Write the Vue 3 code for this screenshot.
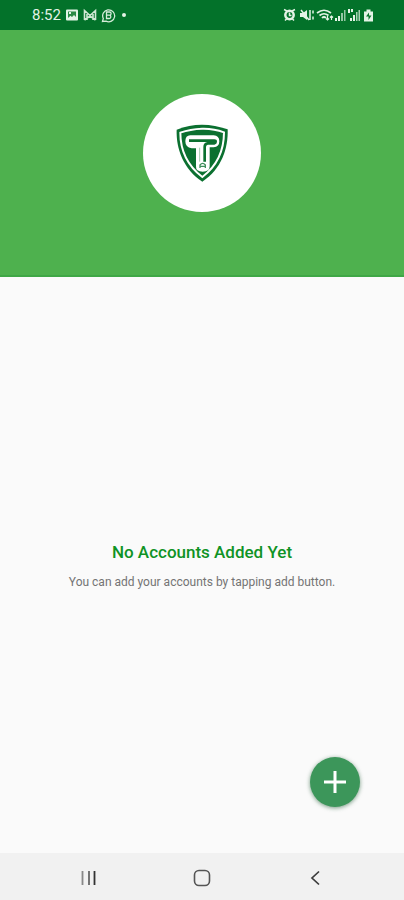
<script setup>
const time = '8:52'
</script>

<template>
  <div class="screen">
    <div class="status">
      <div class="status-group">
        <span class="time">{{ time }}</span>
        <svg width="14" height="14" viewBox="0 0 14 14" aria-hidden="true">
          <rect x="1" y="1.500" width="12" height="11" rx="1" fill="#e4f3e6" />
          <path d="M3 3.500h8v5.500l-2-2-2 2-1.500-1.200L3 10z" fill="#2b8a45" />
          <path d="M4 4h2v2H4z" fill="#e4f3e6" />
        </svg>
        <svg width="14" height="14" viewBox="0 0 14 14" aria-hidden="true">
          <path d="M1.500 12V2.500L7 7.500l5.500-5V12M4 12V6M10 12V6M1.500 12L7 8l5.500 4" fill="none" stroke="#cfe8d3" stroke-width="1.600" />
        </svg>
        <svg width="15" height="15" viewBox="0 0 15 15" aria-hidden="true">
          <path d="M1.500 13.500l.8-3A6 6 0 1 1 5 13.200z" fill="none" stroke="#d5ecd9" stroke-width="1.300" />
          <path d="M5.500 4h2.800a1.600 1.600 0 0 1 .4 3.200A1.700 1.700 0 0 1 8.300 10.500H5.500zM6 7.200h2.500" fill="none" stroke="#d5ecd9" stroke-width="1.300" />
        </svg>
        <span class="dot"></span>
      </div>
      <svg class="indicators" width="94" height="16" viewBox="0 0 94 16" aria-hidden="true">
        <g fill="none" stroke="#e4f3e6" stroke-width="1.500">
          <circle cx="7.500" cy="8" r="4.200" stroke-width="2.500" />
          <path d="M2 2.500l3 1.500M13 2.500l-3 1.500M3 13.500l2-2M12 13.500l-2-2M7.500 5.500v3h2" />
          <path d="M19 3l8 10M28 3v10M31 3.500v3M31 9.500v3" />
          <path d="M35 6q7-5.500 14 0M37.500 8.500q4.500-3.500 9 0M40 11q2-2 4 0" stroke-width="1.700" />
          <path d="M45.500 9v4M44 11.500l1.500 1.500 1.500-1.500M49.500 13V9M48 10.500L49.500 9l1.500 1.500" stroke-width="1.200" />
        </g>
        <g fill="#e4f3e6">
          <path d="M18 6h3l4-3v10l-4-3h-3z" />
          <path d="M53 11h2v3h-2zM56 9h2v5h-2z" />
          <path d="M59 6h2v8h-2zM62 3h1.500v11H62z" opacity=".65" />
          <path d="M66 2h2v4h-2zM69 2h2v3h-2zM68 11h2v3h-2zM71 8h2v6h-2z" />
          <path d="M74 5h1.500v9H74zM76.500 3H78v11h-1.500z" opacity=".75" />
          <path d="M82 4.500h2.500V2.500h4v2H91v10h-9z" />
        </g>
        <path d="M87 5.500l-3 4h2.500V13l3-4.500H87z" fill="#0a742c" />
      </svg>
    </div>

    <header class="hero">
      <div class="badge">
        <svg width="54" height="60" viewBox="0 0 162 180" role="img" aria-label="Shield logo">
          <path d="M5 20Q42 5 81 5T158 19C160 75 140 138 82 176C25 138 3 78 5 20Z" fill="#0b7030" />
          <path d="M16 29Q46 18 81 17T147 28C147 76 131 125 82 162C34 125 16 76 16 29Z" fill="none" stroke="#fff" stroke-width="6" />
          <path d="M46 37H116Q133 38 133 55T116 73H104V130Q104 146 83 146T63 130V76H50Q31 73 31 55T46 37Z" fill="#fff" />
          <path d="M42 53H118Q122 53 122 56T118 61H98Q89 62 89 72V116" fill="none" stroke="#0b7030" stroke-width="8" stroke-linejoin="round" />
          <path d="M74 74V116" fill="none" stroke="#a5cbb0" stroke-width="3" />
          <path d="M75 135V126Q83 116 91 126V135M75 130H91" fill="none" stroke="#3f8f5c" stroke-width="4" />
        </svg>
      </div>
    </header>

    <main class="content">
      <h1>No Accounts Added Yet</h1>
      <p>You can add your accounts by tapping add button.</p>
      <button class="add" type="button" aria-label="Add account">
        <svg width="26" height="26" viewBox="0 0 26 26" aria-hidden="true">
          <path d="M13 2V24M2 13H24" fill="none" stroke="#fff" stroke-width="3" />
        </svg>
      </button>
    </main>

    <nav class="system-nav" aria-label="System navigation">
      <button type="button" aria-label="Recent apps">
        <svg width="20" height="20" viewBox="0 0 20 20" aria-hidden="true">
          <path d="M3.500 3V17" stroke="#888" stroke-width="1.800" />
          <path d="M10 3V17" stroke="#666" stroke-width="1.800" />
          <path d="M15.500 3V17" stroke="#333" stroke-width="1.800" />
        </svg>
      </button>
      <button type="button" aria-label="Home">
        <svg width="20" height="20" viewBox="0 0 20 20" aria-hidden="true">
          <rect x="2.500" y="2.500" width="15" height="15" rx="4.500" fill="none" stroke="#555" stroke-width="1.600" />
        </svg>
      </button>
      <button type="button" aria-label="Back">
        <svg width="20" height="20" viewBox="0 0 20 20" aria-hidden="true">
          <path d="M14 3.500L7 10L14 16.500" fill="none" stroke="#3c3c3c" stroke-width="1.700" />
        </svg>
      </button>
    </nav>
  </div>
</template>

<style>
body {
  margin: 0;
}
</style>

<style scoped>
.screen {
  display: flex;
  flex-direction: column;
  min-height: 100vh;
  background: #fafafa;
  font-family: Roboto, "Liberation Sans", sans-serif;
}

.status {
  display: flex;
  align-items: center;
  justify-content: space-between;
  height: 30px;
  padding: 0 28px 0 32px;
  box-sizing: border-box;
  background: #03722a;
}

.status-group {
  display: flex;
  align-items: center;
  gap: 4px;
}

.time {
  color: #e4f3e6;
  font-size: 15px;
  line-height: 16px;
}

.dot {
  width: 4px;
  height: 4px;
  margin-left: 2px;
  border-radius: 50%;
  background: #e4f3e6;
}

.hero {
  display: flex;
  align-items: center;
  justify-content: center;
  height: 247px;
  box-sizing: border-box;
  border-bottom: 2px solid #3fa746;
  background: #4eb14e;
}

.badge {
  display: flex;
  align-items: center;
  justify-content: center;
  width: 118px;
  height: 118px;
  border-radius: 50%;
  background: #fff;
}

.content {
  position: relative;
  display: flex;
  flex: 1;
  flex-direction: column;
  align-items: center;
  justify-content: center;
  gap: 10px;
  padding: 0 16px;
  text-align: center;
}

h1 {
  margin: 0;
  color: #0f9325;
  font-size: 17px;
  font-weight: 500;
  line-height: 24px;
}

p {
  margin: 0;
  color: #747474;
  font-size: 12px;
  line-height: 16px;
}

.add {
  position: absolute;
  right: 44px;
  bottom: 46px;
  display: flex;
  align-items: center;
  justify-content: center;
  width: 50px;
  height: 50px;
  padding: 0;
  border: 0;
  border-radius: 50%;
  background: #3c965a;
  box-shadow: 0 1px 4px rgba(30, 90, 50, 0.6);
}

.system-nav {
  display: flex;
  justify-content: space-between;
  align-items: center;
  height: 47px;
  padding: 2px 77px 0;
  background: #f1f1f1;
  box-sizing: border-box;
}

.system-nav button {
  display: flex;
  padding: 2px;
  border: 0;
  background: none;
}
</style>
